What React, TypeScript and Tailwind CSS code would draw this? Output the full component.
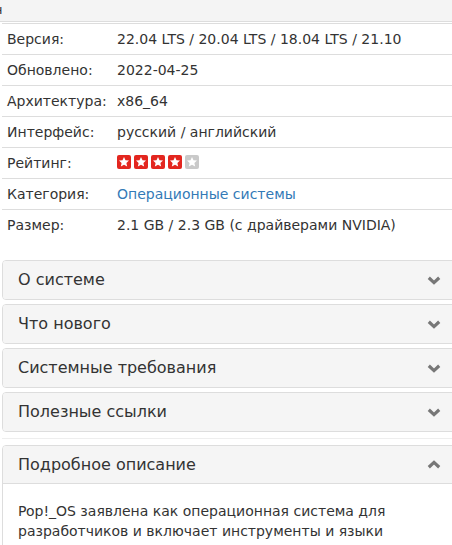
import React from "react";

const rows: { label: string; value: React.ReactNode }[] = [
  { label: "Версия:", value: "22.04 LTS / 20.04 LTS / 18.04 LTS / 21.10" },
  { label: "Обновлено:", value: "2022-04-25" },
  { label: "Архитектура:", value: "x86_64" },
  { label: "Интерфейс:", value: "русский / английский" },
  { label: "Рейтинг:", value: "STARS" },
  { label: "Категория:", value: "LINK" },
  { label: "Размер:", value: "2.1 GB / 2.3 GB (с драйверами NVIDIA)" },
];

function Star({ on }: { on: boolean }) {
  return (
    <span
      className={`flex h-[14px] w-[14px] items-center justify-center rounded-[2px] ${on ? "bg-[#e3261f]" : "bg-[#c9c9c9]"}`}
    >
      <svg width="12" height="12" viewBox="0 0 24 24">
        <path
          d="M12 2l3 6.4 7 .8-5.2 4.8 1.5 7L12 17.5 5.7 21l1.5-7L2 9.2l7-.8z"
          fill="#fff"
        />
      </svg>
    </span>
  );
}

function Chevron({ up }: { up?: boolean }) {
  return (
    <svg width="14" height="10" viewBox="0 0 14 10" className={up ? "rotate-180" : ""}>
      <path d="M1.8 2.8 L7 7.6 L12.2 2.8" stroke="#777" strokeWidth="3.2" fill="none" />
    </svg>
  );
}

function Panel({ title, up, children }: { title: string; up?: boolean; children?: React.ReactNode }) {
  return (
    <div className="rounded-[4px] border border-[#dddddd] bg-white">
      <div
        className={`flex h-[38px] items-center justify-between rounded-t-[3px] bg-[#f5f5f5] pl-[15px] pr-[15px] ${children ? "border-b border-[#dddddd]" : "rounded-b-[3px]"}`}
      >
        <span className="text-[16px] text-[#333]">{title}</span>
        <Chevron up={up} />
      </div>
      {children}
    </div>
  );
}

export default function App() {
  return (
    <div
      className="h-[545px] w-[452px] overflow-hidden bg-white text-[#333]"
      style={{ fontFamily: '"DejaVu Sans", Verdana, sans-serif' }}
    >
      <div className="h-[22px] w-[470px] border-b border-[#dddddd] bg-[#f4f4f4] pt-[1px] text-[13px] leading-[18px]">
        <span className="-ml-[6px]">н</span>
      </div>
      <div className="ml-[2px] mt-[1px] w-[470px] border-t border-[#dddddd]">
        {rows.map((r, i) => (
          <div
            key={r.label}
            className={`flex h-[31px] items-center text-[14px] ${i < rows.length - 1 ? "border-b border-[#dddddd]" : ""}`}
          >
            <div className="w-[115px] pl-[5px]">{r.label}</div>
            <div>
              {r.value === "STARS" ? (
                <div className="-mt-[3px] flex gap-[3px]">
                  <Star on />
                  <Star on />
                  <Star on />
                  <Star on />
                  <Star on={false} />
                </div>
              ) : r.value === "LINK" ? (
                <span className="text-[#337ab7]">Операционные системы</span>
              ) : (
                r.value
              )}
            </div>
          </div>
        ))}
      </div>
      <div className="ml-[2px] mt-[19px] flex w-[455px] flex-col gap-[4px]">
        <Panel title="О системе" />
        <Panel title="Что нового" />
        <Panel title="Системные требования" />
        <Panel title="Полезные ссылки" />
      </div>
      <div className="ml-[2px] mt-[6px] w-[470px] border-t border-[#eeeeee]" />
      <div className="ml-[2px] mt-[6px] w-[455px]">
        <Panel title="Подробное описание" up>
          <div className="px-[15px] pt-[17px] text-[14px] leading-[20px]">
            Pop!_OS заявлена как операционная система для разработчиков и включает инструменты и языки
            программирования, необходимые для работы.
          </div>
        </Panel>
      </div>
    </div>
  );
}
